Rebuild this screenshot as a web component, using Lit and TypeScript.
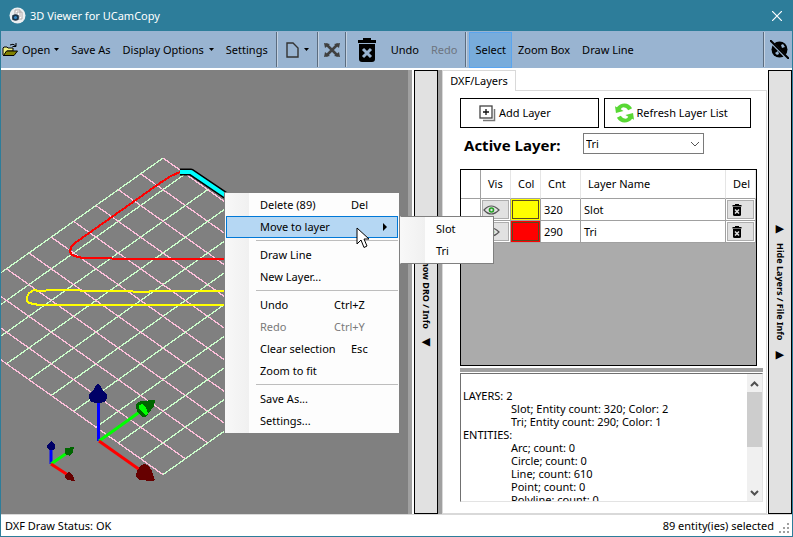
import { LitElement, html, css, svg, nothing } from "lit";
import { customElement, state } from "lit/decorators.js";
import { classMap } from "lit/directives/class-map.js";
import { styleMap } from "lit/directives/style-map.js";

interface MenuEntry {
  label: string;
  keys?: string;
  submenu?: boolean;
  disabled?: boolean;
}

interface Layer {
  name: string;
  count: number;
  color: string;
}

const MENU: MenuEntry[][] = [
  [{ label: "Delete (89)", keys: "Del" }, { label: "Move to layer", submenu: true }],
  [{ label: "Draw Line" }, { label: "New Layer..." }],
  [
    { label: "Undo", keys: "Ctrl+Z" },
    { label: "Redo", keys: "Ctrl+Y", disabled: true },
    { label: "Clear selection", keys: "Esc" },
    { label: "Zoom to fit" },
  ],
  [{ label: "Save As..." }, { label: "Settings..." }],
];

const LAYERS: Layer[] = [
  { name: "Slot", count: 320, color: "#ffff00" },
  { name: "Tri", count: 290, color: "#ff0000" },
];

const REPORT = [
  "",
  "LAYERS: 2",
  "\tSlot; Entity count: 320; Color: 2",
  "\tTri; Entity count: 290; Color: 1",
  "ENTITIES:",
  "\tArc; count: 0",
  "\tCircle; count: 0",
  "\tLine; count: 610",
  "\tPoint; count: 0",
  "\tPolyline; count: 0",
].join("\n");

const base = css`
  :host {
    display: block;
    box-sizing: border-box;
  }
  *,
  *::before,
  *::after {
    box-sizing: border-box;
  }
  button,
  select,
  textarea {
    margin: 0;
    padding: 0;
    border: 0;
    border-radius: 0;
    background: none;
    font: inherit;
    color: inherit;
  }
  svg {
    display: block;
    flex: none;
  }
`;

const trash = (width: number, height: number, cross: string) => html`
  <svg
    width=${width}
    height=${height}
    viewBox="0 0 20 24"
    preserveAspectRatio="none"
    aria-hidden="true"
  >
    <path d="M6 0h8v2h5v3H1V2h5z" fill="#000" />
    <path d="M2 6h16v15a3 3 0 0 1-3 3H5a3 3 0 0 1-3-3z" fill="#000" />
    <path d="M6 11l8 8M14 11l-8 8" stroke=${cross} stroke-width="3" />
  </svg>
`;

/** Isometric drawing area with the floor grid, contours and axis markers. */
@customElement("scene-view")
export class SceneView extends LitElement {
  static styles = [
    base,
    css`
      :host {
        overflow: hidden;
        background: #808080;
      }
      .scene {
        width: 100%;
        height: 100%;
      }
    `,
  ];

  private grid() {
    const cells = 10;
    const dx = 22.35;
    const dy = 15.83;
    const lines = [];
    for (let i = 0; i <= cells; i++) {
      lines.push(svg`
        <path stroke="#ccffcc" d="M${162 + i * dx} ${88 + i * dy}l${-cells * dx} ${cells * dy}" />
        <path stroke="#ffc0dc" d="M${162 - i * dx} ${88 + i * dy}l${cells * dx} ${cells * dy}" />
      `);
    }
    return lines;
  }

  render() {
    return html`
      <svg class="scene" role="img" aria-label="3D view">
        <g fill="none" stroke-width="1.300" shape-rendering="crispEdges">${this.grid()}</g>
        <g fill="none" stroke-width="2" shape-rendering="crispEdges">
          <path
            stroke="#ff0000"
            d="M179 102l-9 4-11 7-85 60-4 4-1 5 2 3 6 2 5 1h28l2 1h250"
          />
          <path
            stroke="#ffff00"
            d="M300 221H150l-3 1h-14l-2-1H80l-2-1H46l-2 1H38l-5-1-5 3-2 4v4l2 2 5 1 5 1h262"
          />
        </g>
        <g fill="none" stroke-linejoin="round">
          <path stroke="#000" stroke-width="7" d="M179 102h11l34 23 30 20" />
          <path stroke="#00ffff" stroke-width="4" d="M179 102h11l34 23 30 20" />
        </g>
        <g fill="none" stroke-width="3">
          <path stroke="#0000ff" d="M97.500 330v41" />
          <path stroke="#00ff00" d="M98 371l42-30" />
          <path stroke="#ff0000" d="M98 371l41 29" />
          <path stroke="#0000ff" d="M50 378v16" />
          <path stroke="#00ff00" d="M50 394l16-11" />
          <path stroke="#ff0000" d="M50 394l17 11" />
        </g>
        <g shape-rendering="crispEdges">
          <path
            fill="#000066"
            d="M97 314q3 2 4 5l5 6v3q-1 5-9 5t-9-5v-3l5-6q1-3 4-5zM50 371l4 4v3q-1 2-4 2t-4-2v-3z"
          />
          <path
            fill="#006600"
            d="M135 334l5-3 14-1-1 6-6 8-2 3h-3l-6-5-1-6zM64 378l9-1-1 5-3 4-5-2z"
          />
          <path fill="#00ff00" d="M138 335l3-1 4 4 2 5-2 2-4-3-3-4z" />
          <path
            fill="#660000"
            d="M140 395l4-1 4 2 3 5 3 9-2 1-14-1-3-4 1-5zM65 404l3-2 4 4 2 5-8-1-2-3z"
          />
        </g>
      </svg>
    `;
  }
}

@customElement("context-menu")
export class ContextMenu extends LitElement {
  static styles = [
    base,
    css`
      :host {
        line-height: 16px;
      }
      .menu {
        position: absolute;
        width: 176px;
        left: 0;
        top: 0;
        padding: 1px;
        border: 1px solid #808080;
        background: linear-gradient(90deg, #f8f8f8, #f0f0f0 24px, #fdfdfd 24px);
      }
      .submenu {
        left: 176px;
        top: 24px;
        width: 94px;
        border-left-color: #f8f8f8;
      }
      .group + .group {
        border-top: 1px solid #bdbdbd;
        border-image: linear-gradient(90deg, transparent 31px, #bdbdbd 31px) 1;
        padding-top: 3px;
        margin-top: 2px;
      }
      .item {
        display: flex;
        align-items: center;
        width: 100%;
        height: 22px;
        padding: 0 29px 0 33px;
        border: 1px solid transparent;
        text-align: left;
        white-space: nowrap;
      }
      .label {
        flex: 1;
      }
      .keys {
        width: 34px;
      }
      .short {
        width: 17px;
      }
      .item.active {
        border-color: #0078d7;
        background: #b5d7f3;
        padding-right: 9px;
      }
      .item:disabled {
        color: #7a7a7a;
      }
    `,
  ];

  render() {
    return html`
      <div class="menu" role="menu">
        ${MENU.map(
          (group) => html`
            <div class="group" role="group">
              ${group.map(
                (entry) => html`
                  <button
                    role="menuitem"
                    class=${classMap({ item: true, active: !!entry.submenu })}
                    ?disabled=${entry.disabled}
                  >
                    <span class="label">${entry.label}</span>
                    ${entry.keys
                      ? html`<span class=${classMap({ keys: true, short: entry.keys.length < 4 })}
                          >${entry.keys}</span
                        >`
                      : nothing}
                    ${entry.submenu
                      ? html`<svg width="5" height="8" aria-hidden="true"><path d="M0 0l4 4-4 4z" /></svg>`
                      : nothing}
                  </button>
                `,
              )}
            </div>
          `,
        )}
      </div>
      <div class="menu submenu" role="menu">
        ${LAYERS.map((l) => html`<button role="menuitem" class="item">${l.name}</button>`)}
      </div>
    `;
  }
}

@customElement("layers-panel")
export class LayersPanel extends LitElement {
  @state() private active = "Tri";

  static styles = [
    base,
    css`
      :host {
        display: flex;
        flex-direction: column;
        background: #fff;
      }
      .tabs {
        display: flex;
        height: 21px;
        flex: none;
      }
      .tab {
        width: 74px;
        border: 1px solid #d9d9d9;
        border-width: 1px 1px 0;
      }
      .strip {
        flex: 1;
        border-bottom: 1px solid #d9d9d9;
      }
      .page {
        flex: 1;
        display: flex;
        flex-direction: column;
        padding: 7px 3px 11px 17px;
        border: 1px solid #d9d9d9;
        border-top: 0;
        min-height: 0;
      }
      .actions {
        display: grid;
        grid-template-columns: 139fr 148fr;
        gap: 5px;
        margin-right: 12px;
      }
      .action {
        display: flex;
        align-items: center;
        height: 30px;
        border: 1px solid #000;
        gap: 3px;
        padding-left: 18px;
        white-space: nowrap;
      }
      .action.wide {
        padding-left: 10px;
      }
      .active-row {
        display: flex;
        align-items: flex-start;
        height: 36px;
        margin: 5px 0 0;
        padding-left: 4px;
      }
      .active-label {
        width: 119px;
        font-size: 15px;
        line-height: 24px;
        font-weight: 700;
      }
      .combo {
        display: grid;
        width: 121px;
        height: 21px;
        border: 1px solid #7a7a7a;
        align-items: center;
      }
      .combo > * {
        grid-area: 1 / 1;
      }
      .select {
        appearance: none;
        width: 100%;
        height: 100%;
        padding-left: 2px;
        outline: none;
      }
      .chevron {
        justify-self: end;
        margin-right: 3px;
        pointer-events: none;
      }
      .grid {
        flex: 1;
        margin-right: 6px;
        border: 1px solid #000;
        background: #ababab;
      }
      table {
        width: 100%;
        table-layout: fixed;
        border-spacing: 0;
      }
      th,
      td {
        padding: 0;
        border: solid #a0a0a0;
        border-width: 0 1px 1px 0;
        background: #fff;
        text-align: left;
        font-weight: 400;
      }
      th {
        height: 29px;
        padding-left: 7px;
        border-right-color: #e5e5e5;
      }
      th:first-child {
        border-right-color: #a0a0a0;
      }
      td {
        height: 22px;
        padding-left: 3px;
        line-height: 18px;
      }
      td.tight {
        padding: 1px;
      }
      .c20 {
        width: 20px;
      }
      .c30 {
        width: 30px;
      }
      .c40 {
        width: 40px;
      }
      .cell {
        display: flex;
        align-items: center;
        width: 100%;
        height: 19px;
        border: 1px solid #adadad;
        background: #e1e1e1;
      }
      .cell.del {
        padding-left: 4px;
      }
      .swatch {
        display: block;
        width: 100%;
        height: 19px;
        border: 1px solid #5a4a20;
      }
      .splitter {
        height: 4px;
        margin: 2px 0 1px;
        background: #a0a0a0;
      }
      .report {
        height: 129px;
        display: flex;
        border: solid #e3e3e3;
        border-color: #707070 #e3e3e3 #e3e3e3 #707070;
        border-width: 1px;
      }
      .text {
        flex: 1;
        min-width: 0;
        padding: 2px 2px 0;
        overflow: hidden;
        resize: none;
        outline: none;
        white-space: pre;
        line-height: 13px;
        tab-size: 48px;
      }
      .bar {
        display: flex;
        flex-direction: column;
        align-items: center;
        width: 15px;
        background: #f0f0f0;
      }
      .thumb {
        width: 100%;
        height: 55px;
        margin-bottom: auto;
        background: #cdcdcd;
      }
      .arrow {
        margin: 7px 0 5px;
      }
    `,
  ];

  render() {
    return html`
      <div class="tabs" role="tablist">
        <button class="tab" role="tab" aria-selected="true">DXF/Layers</button>
        <div class="strip"></div>
      </div>
      <div class="page">
        <div class="actions">
          <button class="action">
            <svg width="17" height="17" viewBox="0 0 17 17" fill="none" aria-hidden="true">
              <path d="M4 15.500h11.500V4" stroke="#777" stroke-width="1.500" />
              <rect x="1" y="1" width="12" height="12" stroke="#444" stroke-width="1.300" />
              <path d="M7 4v6M4 7h6" stroke="#111" stroke-width="1.300" />
            </svg>
            Add Layer
          </button>
          <button class="action wide">
            <svg width="19" height="20" viewBox="0 0 20 20" aria-hidden="true">
              <g fill="#58d834">
                <path d="M0 3l2 1Q5 0 10 0q5 0 8 5l-4 2q-2-3-5-3-2 0-3 2l3 2-8 2z" />
                <path d="M20 17l-2-1q-3 4-8 4-5 0-8-5l4-2q2 3 5 3 2 0 3-2l-3-2 8-2z" />
              </g>
            </svg>
            Refresh Layer List
          </button>
        </div>
        <div class="active-row">
          <label class="active-label" for="layer">Active Layer:</label>
          <div class="combo">
            <select
              id="layer"
              class="select"
              .value=${this.active}
              @change=${(e: Event) => (this.active = (e.target as HTMLSelectElement).value)}
            >
              ${LAYERS.map((l) => html`<option ?selected=${l.name === this.active}>${l.name}</option>`)}
            </select>
            <svg class="chevron" width="10" height="6" fill="none" aria-hidden="true">
              <path d="M1 1l4 4 4-4" stroke="#555" />
            </svg>
          </div>
        </div>
        <div class="grid">
          <table>
            <thead>
              <tr>
                <th class="c20"></th>
                <th class="c30">Vis</th>
                <th class="c30">Col</th>
                <th class="c40">Cnt</th>
                <th>Layer Name</th>
                <th class="c30">Del</th>
              </tr>
            </thead>
            <tbody>
              ${LAYERS.map(
                (l) => html`
                  <tr>
                    <td></td>
                    <td class="tight">
                      <button class="cell" aria-label="Toggle visibility">
                        <svg width="17" height="10" viewBox="0 0 17 10" fill="none" aria-hidden="true">
                          <path d="M1 5q7-8 15 0-8 8-15 0z" stroke="#555" stroke-width="1.200" />
                          <circle cx="8.500" cy="5" r="2" stroke="#22a022" stroke-width="1.600" />
                        </svg>
                      </button>
                    </td>
                    <td class="tight" style=${styleMap({ background: l.color })}>
                      <button class="swatch" aria-label="Layer colour"></button>
                    </td>
                    <td>${l.count}</td>
                    <td>${l.name}</td>
                    <td class="tight">
                      <button class="cell del" aria-label="Delete layer">
                        ${trash(10, 12, "#e1e1e1")}
                      </button>
                    </td>
                  </tr>
                `,
              )}
            </tbody>
          </table>
        </div>
        <div class="splitter"></div>
        <div class="report">
          <textarea class="text" readonly aria-label="File info" .value=${REPORT}></textarea>
          <div class="bar">
            <svg class="arrow" width="9" height="6" fill="none" aria-hidden="true">
              <path d="M1 5l3.500-3.500L8 5" stroke="#505050" stroke-width="2" />
            </svg>
            <div class="thumb"></div>
            <svg class="arrow" width="9" height="6" fill="none" aria-hidden="true">
              <path d="M1 1l3.500 3.500L8 1" stroke="#505050" stroke-width="2" />
            </svg>
          </div>
        </div>
      </div>
    `;
  }
}

@customElement("app-root")
export class AppRoot extends LitElement {
  static styles = [
    base,
    css`
      :host {
        display: flex;
        flex-direction: column;
        min-height: 100vh;
        border: solid #2d7d9a;
        border-width: 0 1px 1px;
        background: #fff;
        color: #000;
        font-family: "Noto Sans", "Open Sans", sans-serif;
        font-size: 11px;
        line-height: 16px;
      }
      .title {
        display: flex;
        align-items: center;
        gap: 4px;
        height: 31px;
        padding: 0 10px 0 8px;
        background: #2d7d9a;
        color: #fff;
      }
      .name {
        flex: 1;
        margin: 0;
        font-size: 11px;
        font-weight: 400;
      }
      .toolbar {
        display: flex;
        align-items: center;
        height: 37px;
        margin-bottom: 2px;
        background: #99b4d1;
        white-space: nowrap;
      }
      .tool {
        display: flex;
        align-items: center;
        justify-content: center;
        height: 36px;
        padding: 0 5px;
        border: 1px solid transparent;
      }
      .tool.drop {
        gap: 5px;
      }
      .tool.open {
        padding-left: 0;
        gap: 4px;
      }
      .tool.icon {
        padding: 0 2px;
      }
      .tool.big {
        padding: 0 7px;
      }
      .tool.on {
        border-color: #5aa5ef;
        background: #78acdb;
      }
      .tool:disabled {
        color: #6d7580;
      }
      .sep {
        width: 2px;
        height: 35px;
        margin: 0 2px;
        border-left: 1px solid #5b6c7f;
        border-right: 1px solid #c4d2e2;
      }
      .push {
        margin-left: auto;
      }
      .body {
        position: relative;
        flex: 1;
        display: grid;
        grid-template-columns: minmax(0, 1fr) 4px 26px 4px 325px 25px;
        min-height: 444px;
      }
      .edge {
        background: #a0a0a0;
      }
      .side {
        display: flex;
        align-items: center;
        justify-content: center;
        gap: 10px;
        width: 24px;
        justify-self: end;
        border: 1px solid #000;
        background: #e1e1e1;
        writing-mode: vertical-rl;
        text-orientation: sideways;
        font-size: 9px;
        line-height: 12px;
        font-weight: 700;
      }
      .tri {
        font-family: "DejaVu Sans", sans-serif;
        font-size: 11px;
      }
      .popup {
        position: absolute;
        left: 223px;
        top: 122px;
      }
      .pointer {
        position: absolute;
        left: 355px;
        top: 157px;
      }
      .status {
        display: flex;
        align-items: center;
        justify-content: space-between;
        height: 22px;
        padding: 0 2px 0 4px;
        border-top: 1px solid #d9d9d9;
      }
      .count {
        display: flex;
        align-items: flex-end;
        gap: 5px;
      }
    `,
  ];

  private caret = html`<svg width="5" height="3" aria-hidden="true"><path d="M0 0h5L2.500 3z" /></svg>`;

  render() {
    return html`
      <header class="title">
        <svg width="17" height="17" viewBox="0 0 17 17" aria-hidden="true">
          <circle cx="8.500" cy="8.500" r="8" fill="#eceff1" />
          <path d="M6 3h5v7H6zM8 5h5v7H8z" fill="#fff" stroke="#b0a8a8" />
          <path d="M3 8h7v5H3z" fill="#8b979f" />
          <circle cx="6.500" cy="10.500" r="3.300" fill="#1c3448" />
          <circle cx="6.500" cy="10.500" r="1.600" fill="#3687c4" />
        </svg>
        <h1 class="name">3D Viewer for UCamCopy</h1>
        <button aria-label="Close">
          <svg width="10" height="10" fill="none" aria-hidden="true">
            <path d="M0 0l10 10M10 0L0 10" stroke="#fff" stroke-width="1.200" />
          </svg>
        </button>
      </header>

      <nav class="toolbar" aria-label="Toolbar">
        <button class="tool drop open">
          <svg width="16" height="14" viewBox="0 0 16 14" aria-hidden="true">
            <path d="M1 12V5l1-1h3l1 1h5v3H5l-3 5z" fill="#f0f080" stroke="#000" />
            <path d="M1.500 12.500l3-4.500h11l-3.500 4.500z" fill="#808000" stroke="#000" />
            <path d="M8 2q3-2 6 1M14 0v3.500h-3.500" fill="none" stroke="#000" />
          </svg>
          Open ${this.caret}
        </button>
        <button class="tool">Save As</button>
        <button class="tool drop">Display Options ${this.caret}</button>
        <button class="tool">Settings</button>
        <span class="sep"></span>
        <button class="tool drop" aria-label="New">
          <svg width="13" height="16" viewBox="0 0 13 16" aria-hidden="true">
            <path d="M1 1h6l5 5v9H1z" fill="none" stroke="#333" stroke-width="1.400" />
          </svg>
          ${this.caret}
        </button>
        <span class="sep"></span>
        <button class="tool icon" aria-label="Fit">
          <svg width="16" height="16" viewBox="0 0 16 16" aria-hidden="true">
            <path d="M2 2l12 12M14 2L2 14" stroke="#404040" stroke-width="2.600" />
            <path d="M0 1l6 1-5 4zM16 1l-6 1 5 4zM0 15l6-1-5-4zM16 15l-6-1 5-4z" fill="#404040" />
          </svg>
        </button>
        <span class="sep"></span>
        <button class="tool big" aria-label="Delete">${trash(20, 24, "#99b4d1")}</button>
        <button class="tool">Undo</button>
        <button class="tool" disabled>Redo</button>
        <span class="sep"></span>
        <button class="tool on">Select</button>
        <button class="tool">Zoom Box</button>
        <button class="tool">Draw Line</button>
        <span class="sep push"></span>
        <button class="tool icon" aria-label="Hide origin">
          <svg width="19" height="19" viewBox="0 0 19 19" aria-hidden="true">
            <circle cx="9.500" cy="9.500" r="8" fill="#000" />
            <path d="M11 5l2-1 2 3-3 1zM5 13l3-2 1 3-2 1z" fill="#99b4d1" />
            <path d="M1 2l17 17" stroke="#99b4d1" stroke-width="3" />
            <path d="M0 0l19 19" stroke="#000" stroke-width="2" />
          </svg>
        </button>
      </nav>

      <main class="body">
        <scene-view></scene-view>
        <div class="edge"></div>
        <button class="side">
          <span class="tri">▼</span><span>Show DRO / Info</span><span class="tri">▼</span>
        </button>
        <div class="edge"></div>
        <layers-panel></layers-panel>
        <button class="side">
          <span class="tri">▲</span><span>Hide Layers / File Info</span><span class="tri">▲</span>
        </button>
        <context-menu class="popup"></context-menu>
        <svg class="pointer" width="13" height="22" viewBox="0 0 13 22" aria-hidden="true">
          <path
            d="M1 1v16l4-4 3 7.500 3-1.500-3-7h5z"
            fill="#fff"
            stroke="#000"
            stroke-linejoin="round"
          />
        </svg>
      </main>

      <footer class="status">
        <span>DXF Draw Status: OK</span>
        <span class="count">
          89 entity(ies) selected
          <svg width="11" height="11" fill="#a0a0a0" aria-hidden="true">
            <path d="M8 0h2v2H8zM4 4h2v2H4zM8 4h2v2H8zM0 8h2v2H0zM4 8h2v2H4zM8 8h2v2H8z" />
          </svg>
        </span>
      </footer>
    `;
  }
}
